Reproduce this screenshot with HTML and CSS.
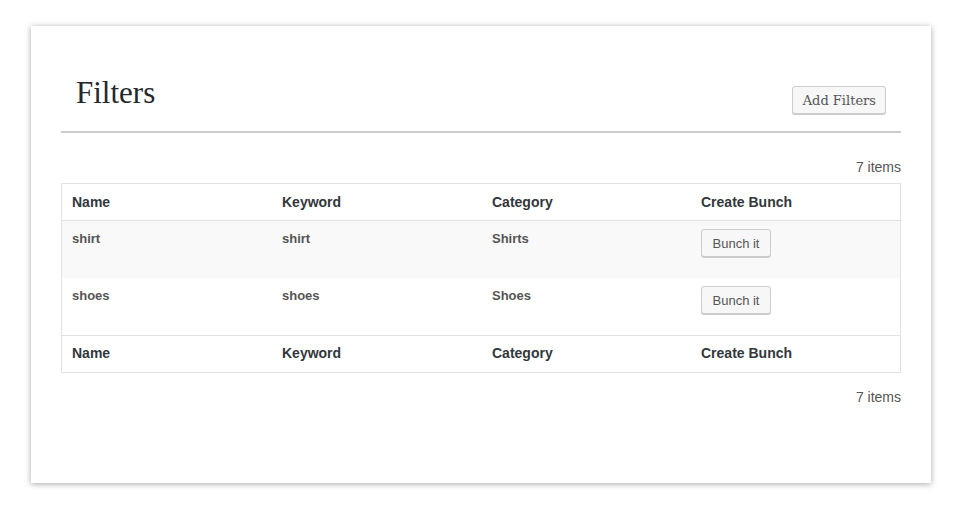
FILE: index.html
```html
<!DOCTYPE html>
<html>
<head>
<meta charset="utf-8">
<link rel="stylesheet" href="styles.css">
</head>
<body>
<div class="card">
  <div class="header">
    <h1 class="title">Filters</h1>
    <button class="btn btn-add">Add Filters</button>
  </div>
  <div class="count count-top">7 items</div>
  <table class="list">
    <colgroup>
      <col class="c1"><col class="c2"><col class="c3"><col class="c4">
    </colgroup>
    <thead>
      <tr><th>Name</th><th>Keyword</th><th>Category</th><th>Create Bunch</th></tr>
    </thead>
    <tbody>
      <tr class="alt"><td>shirt</td><td>shirt</td><td>Shirts</td><td><button class="btn btn-row">Bunch it</button></td></tr>
      <tr><td>shoes</td><td>shoes</td><td>Shoes</td><td><button class="btn btn-row">Bunch it</button></td></tr>
    </tbody>
    <tfoot>
      <tr><th>Name</th><th>Keyword</th><th>Category</th><th>Create Bunch</th></tr>
    </tfoot>
  </table>
  <div class="count count-bottom">7 items</div>
</div>
</body>
</html>
```

FILE: styles.css
```css
html, body {
  margin: 0;
  padding: 0;
  background: #fff;
}
body {
  font-family: "Liberation Sans", Arial, sans-serif;
  color: #555;
  padding: 26px 0 29px 31px;
}
.card {
  width: 900px;
  height: 457px;
  padding: 30px 30px 0 30px;
  box-sizing: border-box;
  background: #fff;
  box-shadow: 0 1px 6px rgba(0,0,0,0.35);
}
.header {
  display: flex;
  justify-content: space-between;
  align-items: flex-start;
  height: 75px;
  padding: 0 15px 0 15px;
  border-bottom: 2px solid #ccc;
}
.title {
  margin: 20px 0 0 0;
  font-family: "Liberation Serif", serif;
  font-weight: normal;
  font-size: 31px;
  line-height: 34px;
  color: #23282d;
}
.btn {
  background: #f7f7f7;
  border: 1px solid #ccc;
  border-radius: 3px;
  box-shadow: 0 1px 0 #ccc;
  color: #555;
  height: 28px;
  line-height: 26px;
  padding: 0 10px;
  margin: 0;
  box-sizing: border-box;
  white-space: nowrap;
  cursor: pointer;
}
.btn-add {
  margin-top: 30px;
  padding: 1px 9px 0 10px;
  font-family: "DejaVu Serif", serif;
  font-size: 13px;
}
.btn-row {
  width: 70px;
  padding: 1px 0 0 0;
  font-family: "Liberation Sans", Arial, sans-serif;
  font-size: 13px;
}
.count {
  text-align: right;
  font-size: 14px;
  line-height: 20px;
  color: #555;
}
.count-top {
  margin-top: 24px;
  margin-bottom: 6px;
}
.count-bottom {
  margin-top: 14px;
}
.list {
  width: 840px;
  border-collapse: separate;
  border-spacing: 0;
  border: 1px solid #e1e1e1;
  table-layout: fixed;
}
.c1, .c2 { width: 210px; }
.c3, .c4 { width: 209px; }
.list th {
  text-align: left;
  font-size: 14px;
  font-weight: bold;
  color: #32373c;
  padding: 0 10px;
  line-height: 20px;
  box-sizing: border-box;
}
.list thead th {
  height: 37px;
  border-bottom: 1px solid #e1e1e1;
}
.list tfoot th {
  height: 37px;
  padding-bottom: 2px;
  border-top: 1px solid #e1e1e1;
}
.list td {
  font-size: 13px;
  font-weight: bold;
  color: #555;
  vertical-align: top;
  padding: 8px 10px;
  line-height: 20px;
  height: 57px;
  box-sizing: border-box;
}
.list tr.alt td {
  background: #f9f9f9;
}
```
